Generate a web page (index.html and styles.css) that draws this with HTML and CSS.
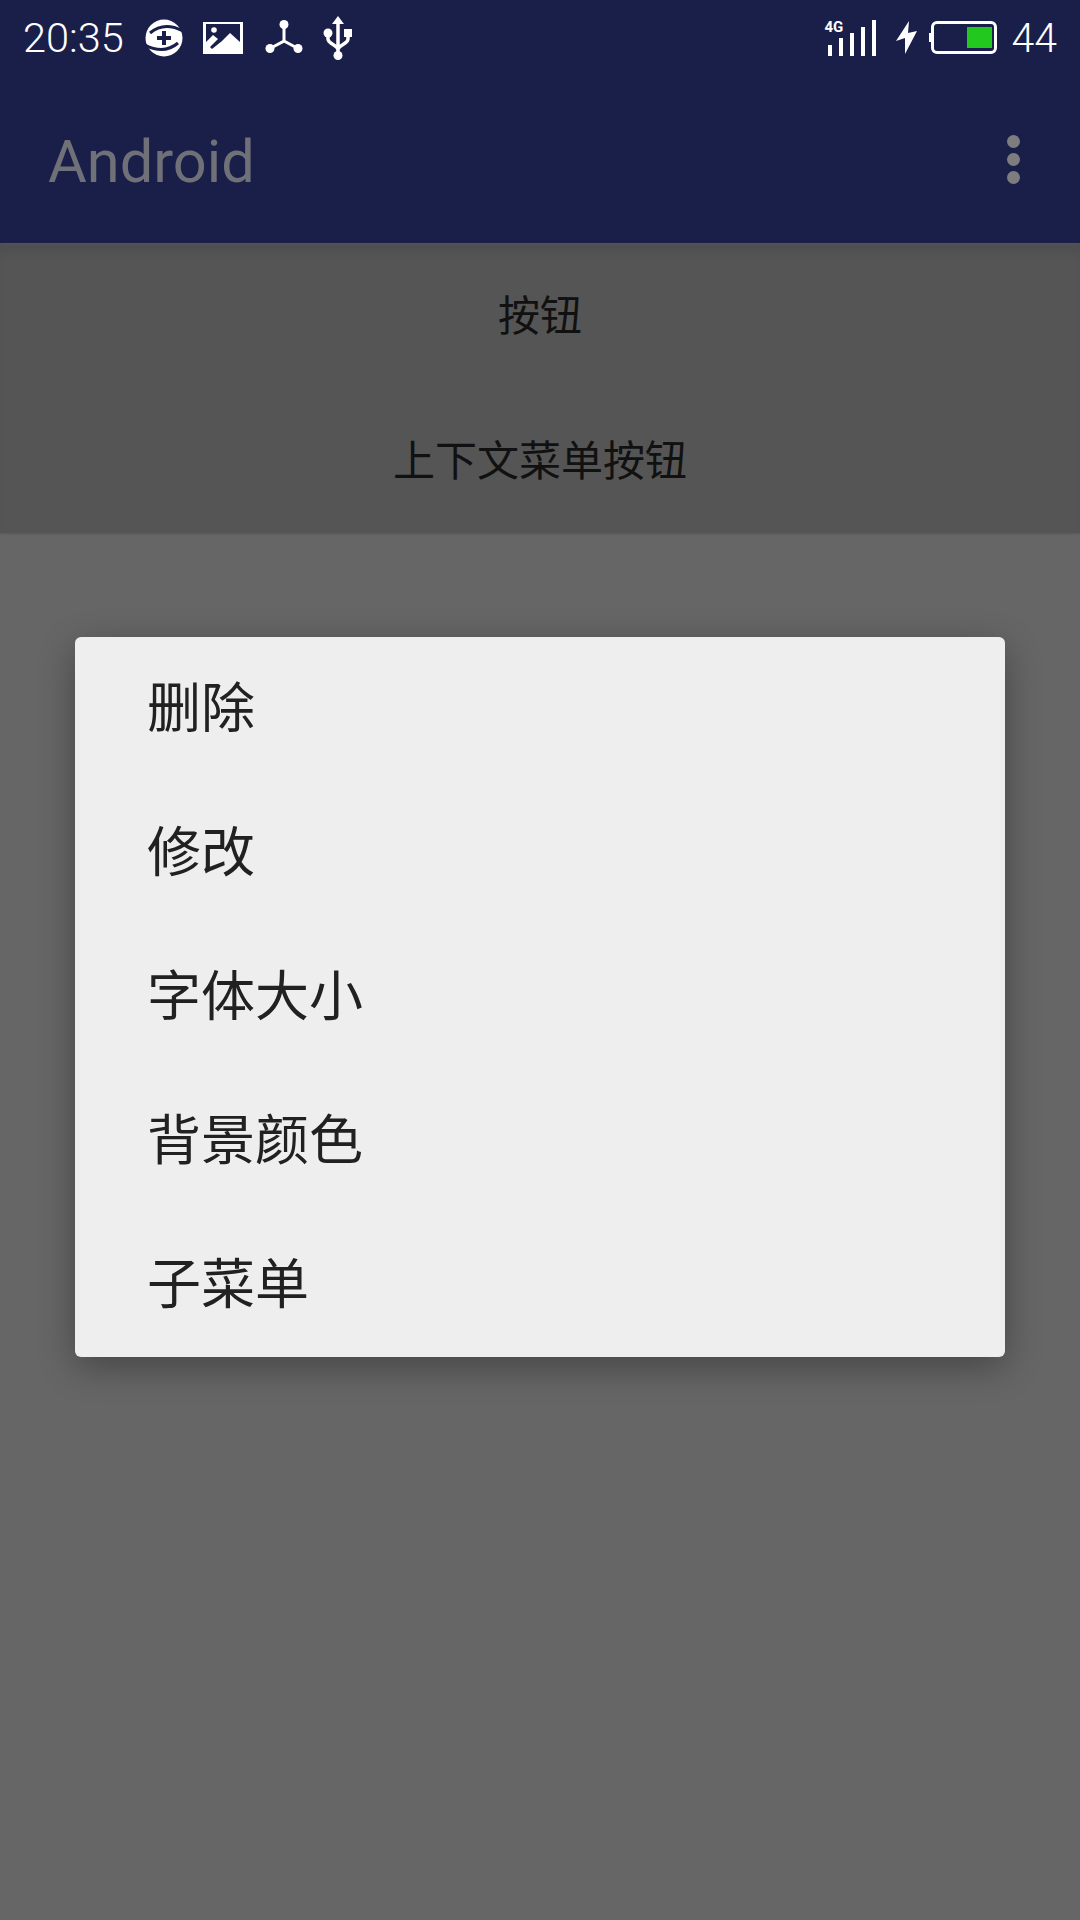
FILE: index.html
```html
<!DOCTYPE html>
<html lang="zh">
<head>
    <meta charset="UTF-8" />
    <meta name="viewport" content="width=device-width, initial-scale=1.0"/>
    <title>Android</title>

    <link rel="stylesheet" href="styles.css">
</head>
<body>

<!-- Status bar -->
<div class="status-bar">
    <div class="status-left">
        <span class="status-time">20:35</span>
        <svg class="icon-plus" viewBox="0 0 38 38" fill="#fff">
            <circle cx="19" cy="19" r="18.500"/>
            <path d="M5 14Q19 2 38 12M33 24Q19 36 0 26" fill="none" stroke="#1a1f4a" stroke-width="3"/>
            <path d="M17 12h4v5h5v4h-5v5h-4v-5h-5v-4h5z" fill="#1a1f4a"/>
        </svg>
        <svg class="icon-image" viewBox="0 0 40 32" fill="#fff">
            <path fill-rule="evenodd" d="M0 0h40v32H0zM3 2v18l7-7 5 4 4 2 8-8 10 9V2zM19 19l-10 8-2-2 8-8z"/>
            <circle cx="11" cy="8" r="2.800"/>
        </svg>
        <svg class="icon-hub" viewBox="0 0 38 36" fill="#fff" stroke="#fff">
            <path d="M19 5V21L5 28.500M19 21L33 28.500" fill="none" stroke-width="3"/>
            <circle cx="19" cy="4.500" r="4.500" stroke="none"/>
            <circle cx="5" cy="28.500" r="4.500" stroke="none"/>
            <circle cx="33" cy="28.500" r="4.500" stroke="none"/>
        </svg>
        <svg class="icon-usb" viewBox="0 0 30 44" fill="#fff" stroke="#fff">
            <path d="M15 0L21 8H9z" stroke="none"/>
            <path d="M15 8V40M5 17v6c0 5 10 6 10 11M25 20v3c0 5-10 6-10 11" fill="none" stroke-width="3.500"/>
            <circle cx="5" cy="17" r="4.500" stroke="none"/>
            <path d="M21 13h8v8h-8z" stroke="none"/>
            <circle cx="15" cy="39.500" r="4.500" stroke="none"/>
        </svg>
    </div>
    <div class="status-right">
        <div class="signal">
            <span class="signal-tag">4G</span>
            <svg class="icon-signal" viewBox="0 0 50 36" fill="#fff">
                <path d="M1 25h4v11H1zM12 18h4v18h-4zM23 13h4v23h-4zM34 7h4v29h-4zM45 0h4v36h-4z"/>
            </svg>
        </div>
        <svg class="icon-bolt" viewBox="0 0 22 34" fill="#fff">
            <path d="M13 0L0 20l9-3v16L21 10l-9 2z"/>
        </svg>
        <div class="battery">
            <div class="battery-fill"></div>
        </div>
        <span class="status-level">44</span>
    </div>
</div>

<!-- App bar -->
<div class="app-bar">
    <span class="app-title">Android</span>
    <div class="overflow">
        <span class="dot"></span>
        <span class="dot"></span>
        <span class="dot"></span>
    </div>
</div>

<!-- Buttons -->
<div class="buttons">
    <div class="btn-row">按钮</div>
    <div class="btn-row">上下文菜单按钮</div>
</div>

<!-- Context menu -->
<div class="content">
    <div class="menu">
        <div class="menu-item">删除</div>
        <div class="menu-item">修改</div>
        <div class="menu-item">字体大小</div>
        <div class="menu-item">背景颜色</div>
        <div class="menu-item">子菜单</div>
    </div>
</div>

</body>
</html>
```

FILE: styles.css
```css
html, body {
    height: 100%;
}

body {
    margin: 0;
    padding: 0;
    font-family: Roboto, "Noto Sans CJK SC", sans-serif;
    background: #666;
    display: flex;
    flex-direction: column;
}

/* Status bar */
.status-bar {
    height: 75px;
    background: #1a1f4a;
    color: #fff;
    display: flex;
    justify-content: space-between;
    align-items: center;
    padding: 0 23px;
}

.status-left, .status-right {
    display: flex;
    align-items: center;
}

.status-time {
    font-size: 41.5px;
    font-weight: 300;
    margin-right: 21px;
}

.icon-plus {
    width: 38px;
    height: 38px;
    margin-right: 20px;
}

.icon-image {
    width: 40px;
    height: 32px;
    margin-right: 22px;
}

.icon-hub {
    width: 38px;
    height: 36px;
    margin-right: 20px;
}

.icon-usb {
    width: 30px;
    height: 44px;
}

.signal {
    position: relative;
    width: 50px;
    height: 36px;
    margin-right: 19px;
}

.signal-tag {
    position: absolute;
    top: 0;
    left: -2px;
    font-size: 15px;
    font-weight: 700;
    line-height: 14px;
    background: #1a1f4a;
}

.icon-signal {
    width: 50px;
    height: 36px;
    display: block;
}

.icon-bolt {
    width: 22px;
    height: 34px;
    margin-right: 13px;
}

.battery {
    width: 66px;
    height: 33px;
    box-sizing: border-box;
    border: 3px solid #fff;
    border-radius: 6px;
    display: flex;
    justify-content: flex-end;
    padding: 3px 2px;
    margin-right: 15px;
    position: relative;
}

.battery::before {
    content: "";
    position: absolute;
    left: -5px;
    top: 9px;
    width: 2px;
    height: 9px;
    background: #fff;
}

.battery-fill {
    width: 25px;
    background: #22c81e;
}

.status-level {
    font-size: 41px;
    font-weight: 300;
}

/* App bar */
.app-bar {
    height: 168px;
    background: #1a1f4a;
    display: flex;
    justify-content: space-between;
    align-items: flex-start;
    padding: 0 48px;
    box-shadow: 0 2px 2px rgba(90, 100, 110, 0.35);
    position: relative;
}

.app-title {
    font-size: 59.5px;
    line-height: 70px;
    color: #707078;
    margin-top: 52px;
}

.overflow {
    display: flex;
    flex-direction: column;
    gap: 5px;
    margin-top: 60px;
    margin-right: 12px;
}

.dot {
    width: 13px;
    height: 13px;
    border-radius: 50%;
    background: #7d7d80;
}

/* Buttons */
.buttons {
    background: #555;
    box-shadow: inset 0 14px 14px -8px rgba(0, 0, 0, 0.12), 0 1px 2px rgba(0, 0, 0, 0.15);
}

.btn-row {
    height: 145px;
    box-sizing: border-box;
    padding-bottom: 7px;
    display: flex;
    align-items: center;
    justify-content: center;
    font-size: 42px;
    color: #111;
}

/* Context menu */
.content {
    flex: 1;
    padding: 104px 75px 0;
}

.menu {
    height: 720px;
    background: #eee;
    border-radius: 6px;
    box-shadow: 0 10px 36px rgba(0, 0, 0, 0.32);
    display: flex;
    flex-direction: column;
}

.menu-item {
    flex: 1;
    display: flex;
    align-items: center;
    padding: 0 0 10px 72px;
    font-size: 54px;
    color: #212121;
}
```
